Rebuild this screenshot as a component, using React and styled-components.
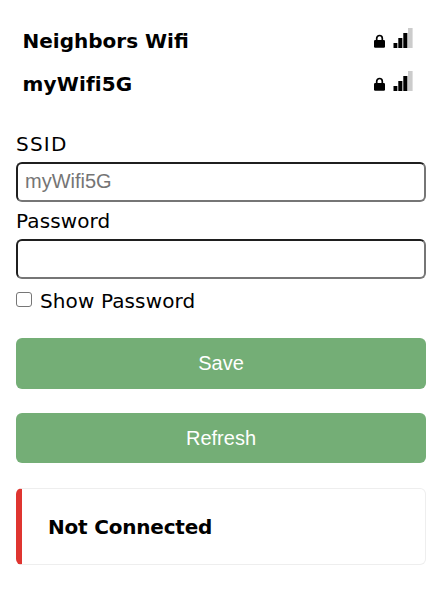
import React, { useState } from "react";
import styled, { createGlobalStyle } from "styled-components";

const GlobalStyle = createGlobalStyle`
  * { box-sizing: border-box; }
  body {
    margin: 0;
    background: #fff;
    color: #000;
    font: 20px/24px Verdana, "DejaVu Sans", sans-serif;
  }
`;

const Page = styled.main`
  display: flex;
  flex-direction: column;
  height: 606px;
  padding: 19px 16px 0;
`;

const Network = styled.div`
  display: flex;
  align-items: center;
  justify-content: space-between;
  height: 43px;
  padding: 0 13px 0 6.5px;
  cursor: pointer;
`;

const Bold = styled.span`
  font-weight: 700;
  letter-spacing: ${(p) => p.$spacing || "0"};
`;

const Icons = styled.span`
  display: flex;
  align-items: flex-end;
  gap: 8px;
  height: 20px;
  margin-top: -5px;
  svg { display: block; }
`;

const Form = styled.form`
  display: flex;
  flex-direction: column;
  margin-top: 27px;
`;

const Label = styled.label`
  height: 30px;
  line-height: 24px;
  letter-spacing: ${(p) => p.$spacing || "0"};
`;

const Field = styled.input`
  width: 100%;
  height: 40px;
  margin: 0 0 7px;
  padding: 0 7px 2px;
  border: 2px solid;
  border-color: #1f1f1f #767676 #767676 #1f1f1f;
  border-radius: 6px;
  background: #fff;
  font: 20px "Liberation Sans", Arial, sans-serif;
  outline: none;
  &::placeholder { color: #757575; opacity: 1; }
`;

const CheckRow = styled.label`
  display: flex;
  align-items: flex-start;
  gap: 8px;
  height: 28px;
  padding-top: 3px;
  letter-spacing: 0.12px;
`;

const Checkbox = styled.input`
  appearance: none;
  width: 16px;
  height: 15px;
  margin: 3px 0 0;
  border: 1px solid #767676;
  border-radius: 3px;
  background: #fff;
  &:checked { background: #74ae76; }
`;

const Button = styled.button`
  height: ${(p) => p.$height};
  margin-top: 24px;
  padding: 0;
  border: 0;
  border-radius: 6px;
  background: #74ae76;
  color: #fff;
  font: 20px "Liberation Sans", Arial, sans-serif;
`;

const Status = styled.section`
  display: flex;
  align-items: center;
  height: 77px;
  margin-top: 25px;
  padding-left: 26px;
  border: 1px solid #eee;
  border-left: 6px solid #df3530;
  border-radius: 6px;
`;

const Lock = () => (
  <svg width="11" height="14" viewBox="0 0 11 14">
    <path d="M2.7 7.5V4.3a2.8 2.8 0 0 1 5.6 0V7.5" fill="none" stroke="#000" strokeWidth="1.7" />
    <rect x="0" y="6" width="11" height="7.8" rx="1.2" />
  </svg>
);

const Signal = () => (
  <svg width="20" height="20" viewBox="0 0 20 20">
    <path d="M4 15h1v5H4zM9 10h1v10H9zM14 5h1v15h-1zM15 0h4.6v20H15z" fill="#ccc" />
    <path d="M.5 15H4.2v5H.5zM5.3 10H9.2v10H5.3zM10.3 5H14.2v15h-3.9z" />
  </svg>
);

const networks = [
  { name: "Neighbors Wifi", spacing: "0px" },
  { name: "myWifi5G", spacing: "0.15px" },
];

export default function App() {
  const [visible, setVisible] = useState(false);
  return (
    <Page>
      <GlobalStyle />
      {networks.map((n) => (
        <Network key={n.name}>
          <Bold $spacing={n.spacing}>{n.name}</Bold>
          <Icons><Lock /><Signal /></Icons>
        </Network>
      ))}
      <Form onSubmit={(e) => e.preventDefault()}>
        <Label htmlFor="ssid" $spacing="1.2px">SSID</Label>
        <Field id="ssid" placeholder="myWifi5G" />
        <Label htmlFor="password" $spacing="0.12px">Password</Label>
        <Field id="password" type={visible ? "text" : "password"} />
        <CheckRow>
          <Checkbox type="checkbox" checked={visible} onChange={(e) => setVisible(e.target.checked)} />
          Show Password
        </CheckRow>
        <Button $height="51px" type="submit">Save</Button>
        <Button $height="50px" type="button">Refresh</Button>
      </Form>
      <Status><Bold $spacing="-0.2px">Not Connected</Bold></Status>
    </Page>
  );
}
